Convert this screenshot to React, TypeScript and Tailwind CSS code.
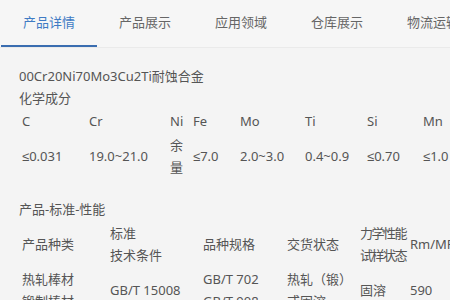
import React from 'react';

const tabs = ['产品详情', '产品展示', '应用领域', '仓库展示', '物流运输'];

const elements = [
  { name: 'C', value: '≤0.031', w: 'w-[67px]' },
  { name: 'Cr', value: '19.0~21.0', w: 'w-[81px]' },
  { name: 'Ni', value: '余量', w: 'w-[23px]' },
  { name: 'Fe', value: '≤7.0', w: 'w-[47px]' },
  { name: 'Mo', value: '2.0~3.0', w: 'w-[65px]' },
  { name: 'Ti', value: '0.4~0.9', w: 'w-[62px]' },
  { name: 'Si', value: '≤0.70', w: 'w-[56px]' },
  { name: 'Mn', value: '≤1.0', w: 'w-[80px]' },
];

const cell = 'px-[3px] py-[1px] align-middle text-left font-normal';

const App: React.FC = () => {
  return (
    <div
      className="w-[450px] h-[300px] overflow-hidden bg-[#f4f4f4] text-[13px] leading-[22px] text-[#555]"
      style={{ fontFamily: '"Noto Sans", "Noto Sans CJK SC", sans-serif' }}
    >
      {/* tab bar */}
      <div className="flex h-[48px] pl-[1px] bg-[#f6f6f6] border-b border-[#eaeaea] whitespace-nowrap">
        {tabs.map((t, i) => (
          <div
            key={t}
            className={`w-[96px] shrink-0 h-[47px] flex items-start justify-center pt-[11px] ${
              i === 0 ? 'text-[#3f7bc4] border-b-2 border-[#3a6db0]' : 'text-[#666]'
            }`}
          >
            {t}
          </div>
        ))}
      </div>

      <div className="pl-[19px] pt-[17px]">
        <p>00Cr20Ni70Mo3Cu2Ti耐蚀合金</p>
        <p>化学成分</p>

        <table className="table-fixed border-collapse w-[481px]">
          <tbody>
            <tr>
              {elements.map((e) => (
                <th key={e.name} className={`${cell} ${e.w}`}>{e.name}</th>
              ))}
            </tr>
            <tr>
              {elements.map((e) => (
                <td key={e.name} className={`${cell} break-all`}>
                  {e.value.startsWith('≤') ? (
                    <>
                      <span style={{ fontFamily: '"Liberation Sans", sans-serif' }}>≤</span>
                      {e.value.slice(1)}
                    </>
                  ) : (
                    e.value
                  )}
                </td>
              ))}
            </tr>
          </tbody>
        </table>

        <p className="mt-[19px]">产品-标准-性能</p>

        <table className="table-fixed border-collapse w-[481px] mt-[1px] whitespace-nowrap">
          <tbody>
            <tr>
              <th className={`${cell} w-[88px]`}>产品种类</th>
              <th className={`${cell} w-[93px]`}>标准<br />技术条件</th>
              <th className={`${cell} w-[84px] align-bottom`}>品种规格</th>
              <th className={`${cell} w-[73px]`}>交货状态</th>
              <th className={`${cell} w-[50px] tracking-[-1.5px]`}>力学性能<br />试样状态</th>
              <th className={`${cell} w-[93px] align-bottom`}>Rm/MPa</th>
            </tr>
            <tr>
              <td className={cell}>热轧棒材<br />锻制棒材</td>
              <td className={cell}>GB/T 15008</td>
              <td className={cell}>GB/T 702<br />GB/T 908</td>
              <td className={cell}>热轧（锻）<br />或固溶</td>
              <td className={cell}>固溶</td>
              <td className={cell}>590</td>
            </tr>
          </tbody>
        </table>
      </div>
    </div>
  );
};

export default App;
